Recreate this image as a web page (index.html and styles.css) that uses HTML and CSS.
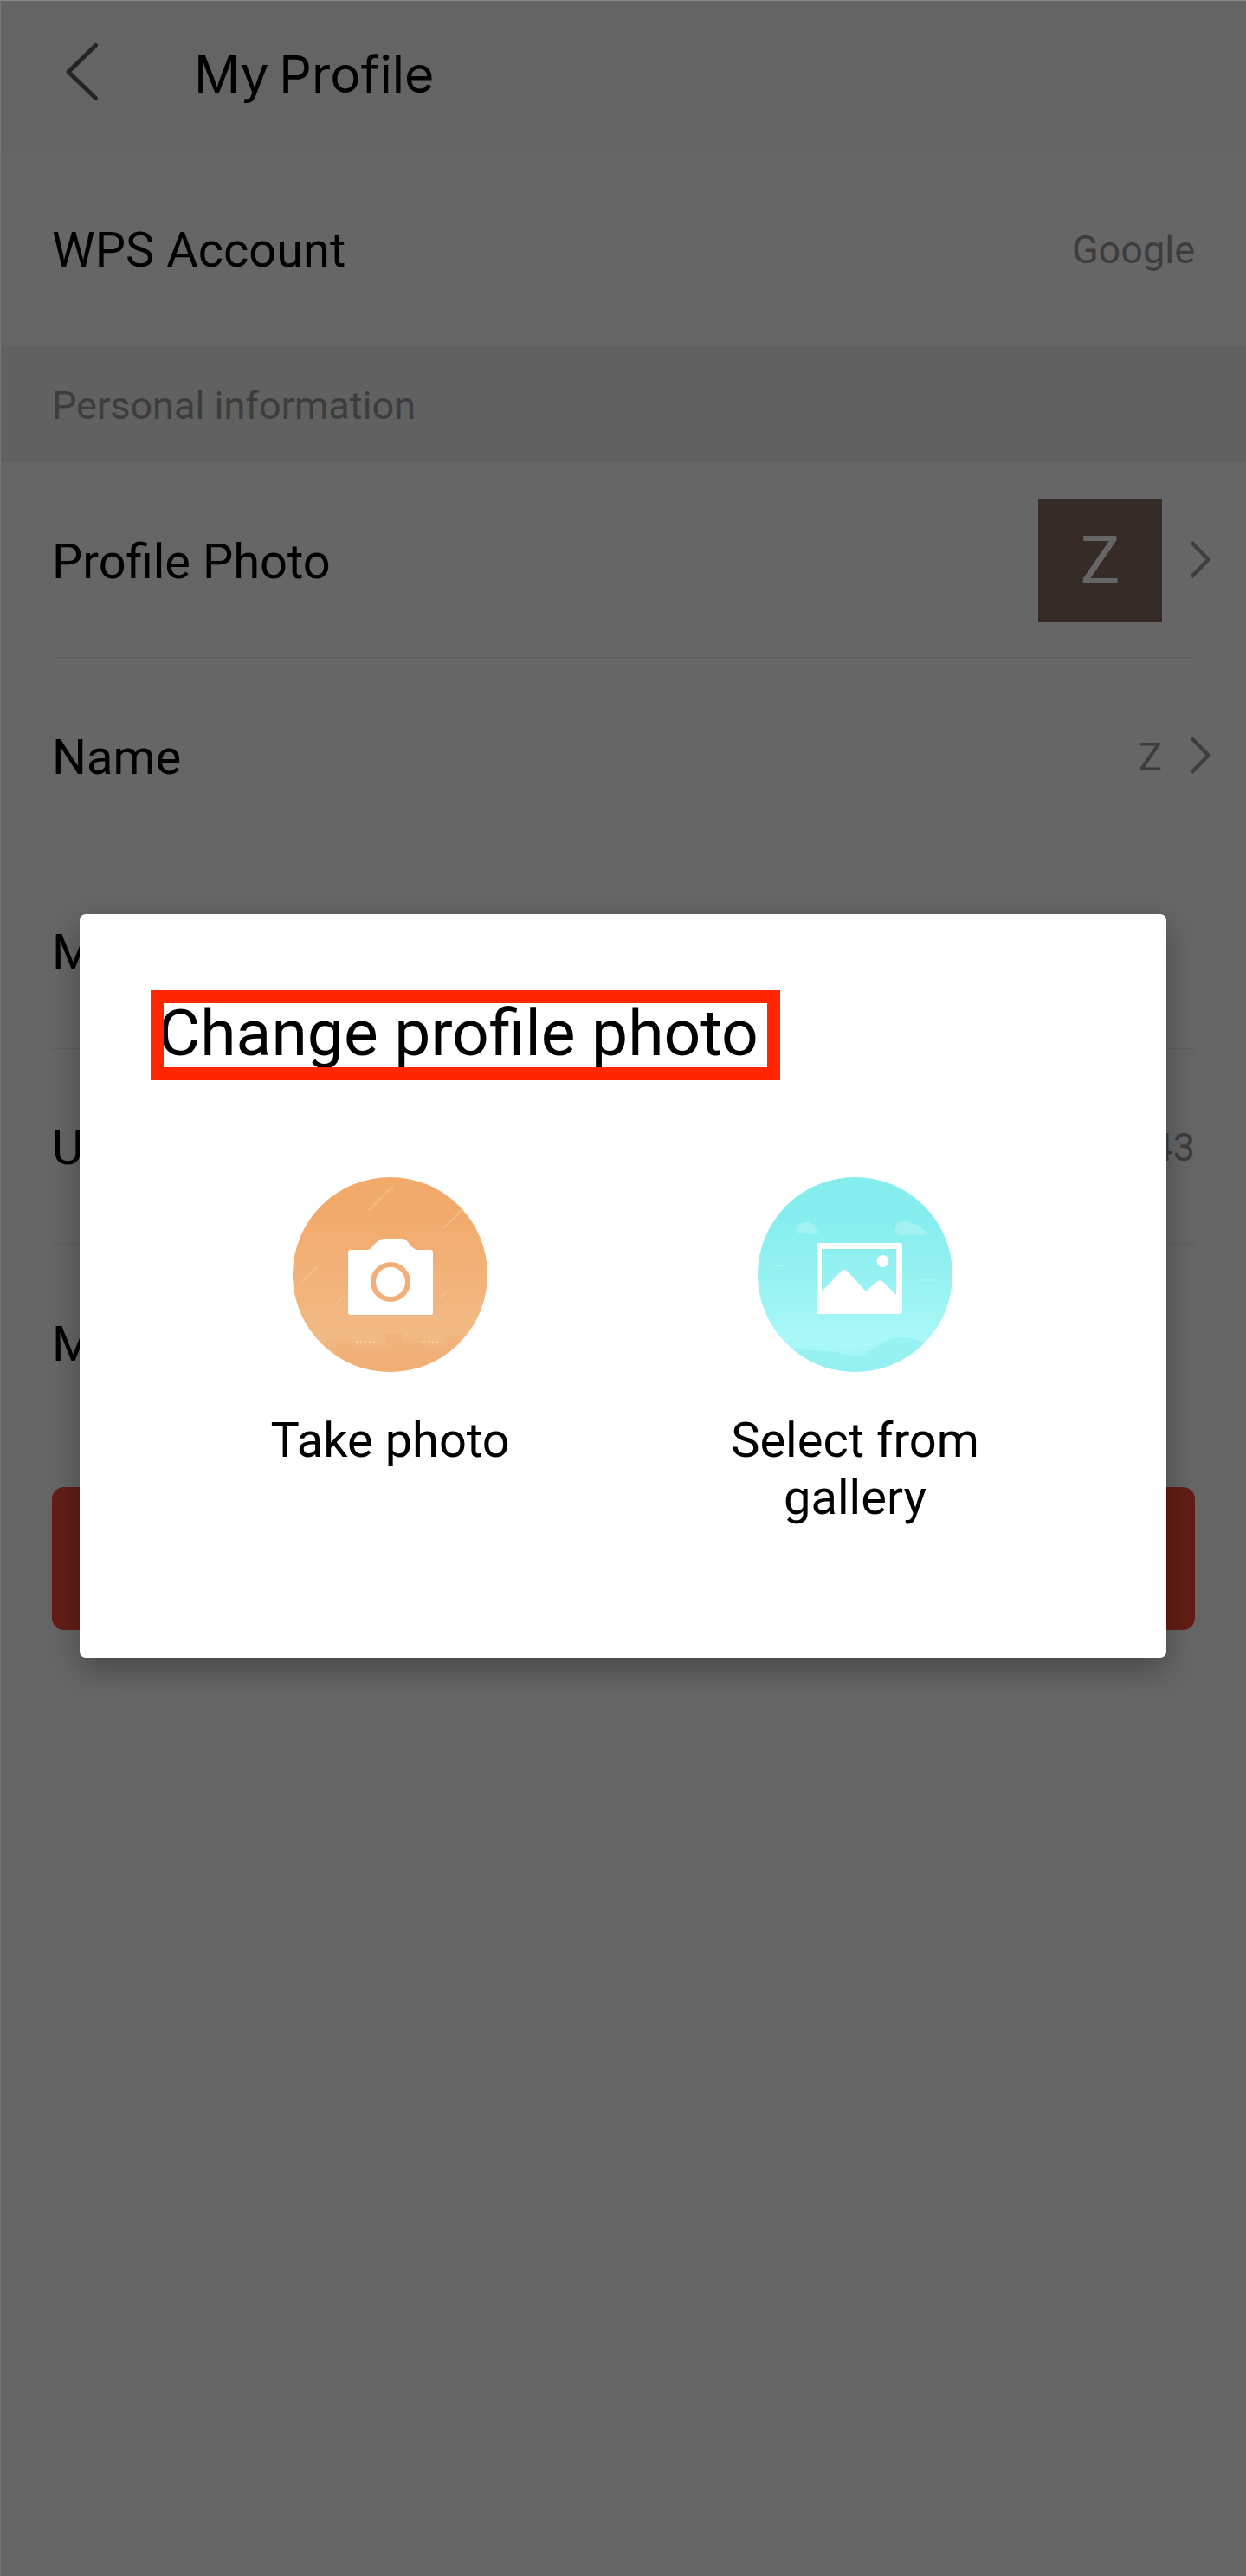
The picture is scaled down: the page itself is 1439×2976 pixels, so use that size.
FILE: index.html
```html
<!DOCTYPE html>
<html lang="en">
<head>
<meta charset="utf-8">
<title>My Profile</title>
<link rel="stylesheet" href="styles.css">
</head>
<body>
<main class="screen">
  <header class="topbar">
    <svg class="back" width="42" height="70" viewBox="0 0 42 70"><path d="M36.500 5.500 5 36 36.500 66.500" transform="translate(0 -1)"/></svg>
    <h1 class="topbar-title">My Profile</h1>
  </header>
  <section class="row account"><span class="label">WPS Account</span><span class="value">Google</span></section>
  <h2 class="section-title">Personal information</h2>
  <section class="list">
    <div class="row linked"><span class="label">Profile Photo</span><span class="avatar">Z</span>
      <svg class="chevron" width="28" height="48" viewBox="0 0 28 48"><path d="M4 3.500 23.500 23.500 4 43.500"/></svg></div>
    <div class="row linked"><span class="label">Name</span><span class="value">Z</span>
      <svg class="chevron" width="28" height="48" viewBox="0 0 28 48"><path d="M4 3.500 23.500 23.500 4 43.500"/></svg></div>
    <div class="row"><span class="label">M</span></div>
    <div class="row"><span class="label">U</span><span class="value">43</span></div>
    <div class="row"><span class="label">M</span></div>
  </section>
  <div class="button"></div>
</main>
<div class="overlay">
  <section class="dialog">
    <h2 class="dialog-title"><span>Change profile photo</span></h2>
    <div class="options">
      <div class="option">
        <svg width="225" height="225" viewBox="0 0 225 225">
          <defs>
            <linearGradient id="orange" x1="0" y1="0" x2="0" y2="1"><stop offset=".2" stop-color="#f2aa6c"/><stop offset=".8" stop-color="#f2ba84"/><stop offset="1" stop-color="#f0ae74"/></linearGradient>
            <clipPath id="disc"><circle cx="112.5" cy="112.5" r="112.5"/></clipPath>
          </defs>
          <g clip-path="url(#disc)">
            <rect width="225" height="225" fill="url(#orange)"/>
            <path d="M50 225v-35h20v7h38v-17h20v12h25v5h25v-14h15v42z" fill="#efae76" opacity=".5"/>
            <path d="M116 10 88 38M195 38 174 59M28 104 11 121M60 137 49 149M178 132 171 139" stroke="#f6c490" stroke-width="2.5" opacity=".6"/>
            <path d="M73 190h30M151 190h24" stroke="#f9d6ad" stroke-width="1.5" stroke-dasharray="2 3"/>
          </g>
          <path d="M67 84h19q3 0 6-4l5-5q4-4 8-4h21q4 0 7 4l5 6q3 3 6 3h15q3 0 3 3v69q0 3-3 3H67q-3 0-3-3V87q0-3 3-3z" fill="#fff"/>
          <circle cx="113" cy="121" r="20" fill="none" stroke="#efb07b" stroke-width="6"/>
        </svg>
        <span class="option-label">Take photo</span>
      </div>
      <div class="option">
        <svg width="225" height="225" viewBox="0 0 225 225">
          <defs><linearGradient id="cyan" x1="0" y1="0" x2="0" y2="1"><stop offset=".2" stop-color="#86edee"/><stop offset=".5" stop-color="#95f1f2"/><stop offset=".82" stop-color="#a9f8f7"/><stop offset="1" stop-color="#a0f5f4"/></linearGradient></defs>
          <g clip-path="url(#disc)">
            <rect width="225" height="225" fill="url(#cyan)"/>
            <path d="M30 198q42 2 60 4 20 7 32 3c18-9 25-20 42-20q28 1 50 20v20H30z" fill="#90f0f0" opacity=".7"/>
            <path d="M45 65q-2-11 7-12 9-5 13 4 4 2 5 9zM158 61q1-8 7-9 9-3 14 2 9 0 11 6 5 1 6 6l-28 1q-9-1-10-6z" fill="#a2f2f2"/>
            <path d="M18 102h12M185 119h21" stroke="#a6f5f4" stroke-width="2"/>
            <path d="M40 193h92" stroke="#c3fbfa" stroke-width="1.5" stroke-dasharray="2 4"/>
          </g>
          <path fill-rule="evenodd" fill="#fff" d="M71 76h93q3 0 3 3v76q0 3-3 3H71q-3 0-3-3V79q0-3 3-3zm3 7v49l22-23q4-4 8 0l21 23 12-11q4-3 8 0l15 15V83z"/>
          <circle cx="144.500" cy="97" r="7" fill="#fff"/>
        </svg>
        <span class="option-label">Select from gallery</span>
      </div>
    </div>
  </section>
</div>
</body>
</html>
```
FILE: styles.css
```css
* { box-sizing: border-box; }
body { margin: 0; background: #666; color: #000; font-family: Roboto, sans-serif; }
h1, h2 { margin: 0; font-weight: 400; }
svg { display: block; flex: none; }
.screen { height: 2976px; border-top: 1px solid #8a8a8a; border-left: 1px solid #777; overflow: hidden; }
.topbar { height: 174px; display: flex; align-items: center; padding: 0 0 9px 73px; background: #646464; border-bottom: 1px solid #5b5b5b; }
.back { fill: none; stroke: #242424; stroke-width: 5; stroke-linecap: round; stroke-linejoin: round; }
.topbar-title { margin: 6px 0 0 108px; font-family: Inter, sans-serif; font-size: 59px; line-height: 70px; word-spacing: -5px; }
.row { display: flex; align-items: center; height: 226px; margin: 0 59px; border-bottom: 1px solid #5e5e5e; }
.account { height: 224px; border: 0; }
.label { flex: 1; padding-top: 3px; font-size: 56px; line-height: 66px; }
.value { padding-top: 3px; font-size: 45px; line-height: 54px; color: #3d3d3d; }
.section-title { height: 135px; padding: 0 59px; line-height: 140px; font-size: 45px; color: #3d3d3d; background: #616161; }
.linked { margin-right: 39px; border: 0; background: linear-gradient(#5e5e5e, #5e5e5e) left bottom / 1320px 1px no-repeat; }
.row:last-child { border: 0; }
.avatar { width: 143px; height: 143px; background: #372b28; color: #666; font-size: 77px; line-height: 145px; text-align: center; }
.chevron { margin-left: 30px; fill: none; stroke: #3f3f3f; stroke-width: 4.5; }
.button { height: 165px; margin: 54px 59px 0; border-radius: 14px; background: #621e16; }
.overlay { position: absolute; left: 0; top: 0; width: 1439px; height: 2976px; padding: 1056px 92px 0; }
.dialog { height: 859px; padding: 88px 83px 0 82px; background: #fff; border-radius: 7px; box-shadow: 0 14px 36px rgba(0, 0, 0, .3); }
.dialog-title { width: 727px; height: 104px; border: 15px solid #ff2600; font-size: 75px; line-height: 68px; white-space: nowrap; overflow: hidden; }
.dialog-title span { margin-left: -6.5px; }
.options { display: flex; margin: 112px 8px 0; }
.option { flex: 1; display: flex; flex-direction: column; align-items: center; }
.option-label { width: 300px; margin-top: 46px; font-size: 56px; line-height: 66px; text-align: center; }
```
